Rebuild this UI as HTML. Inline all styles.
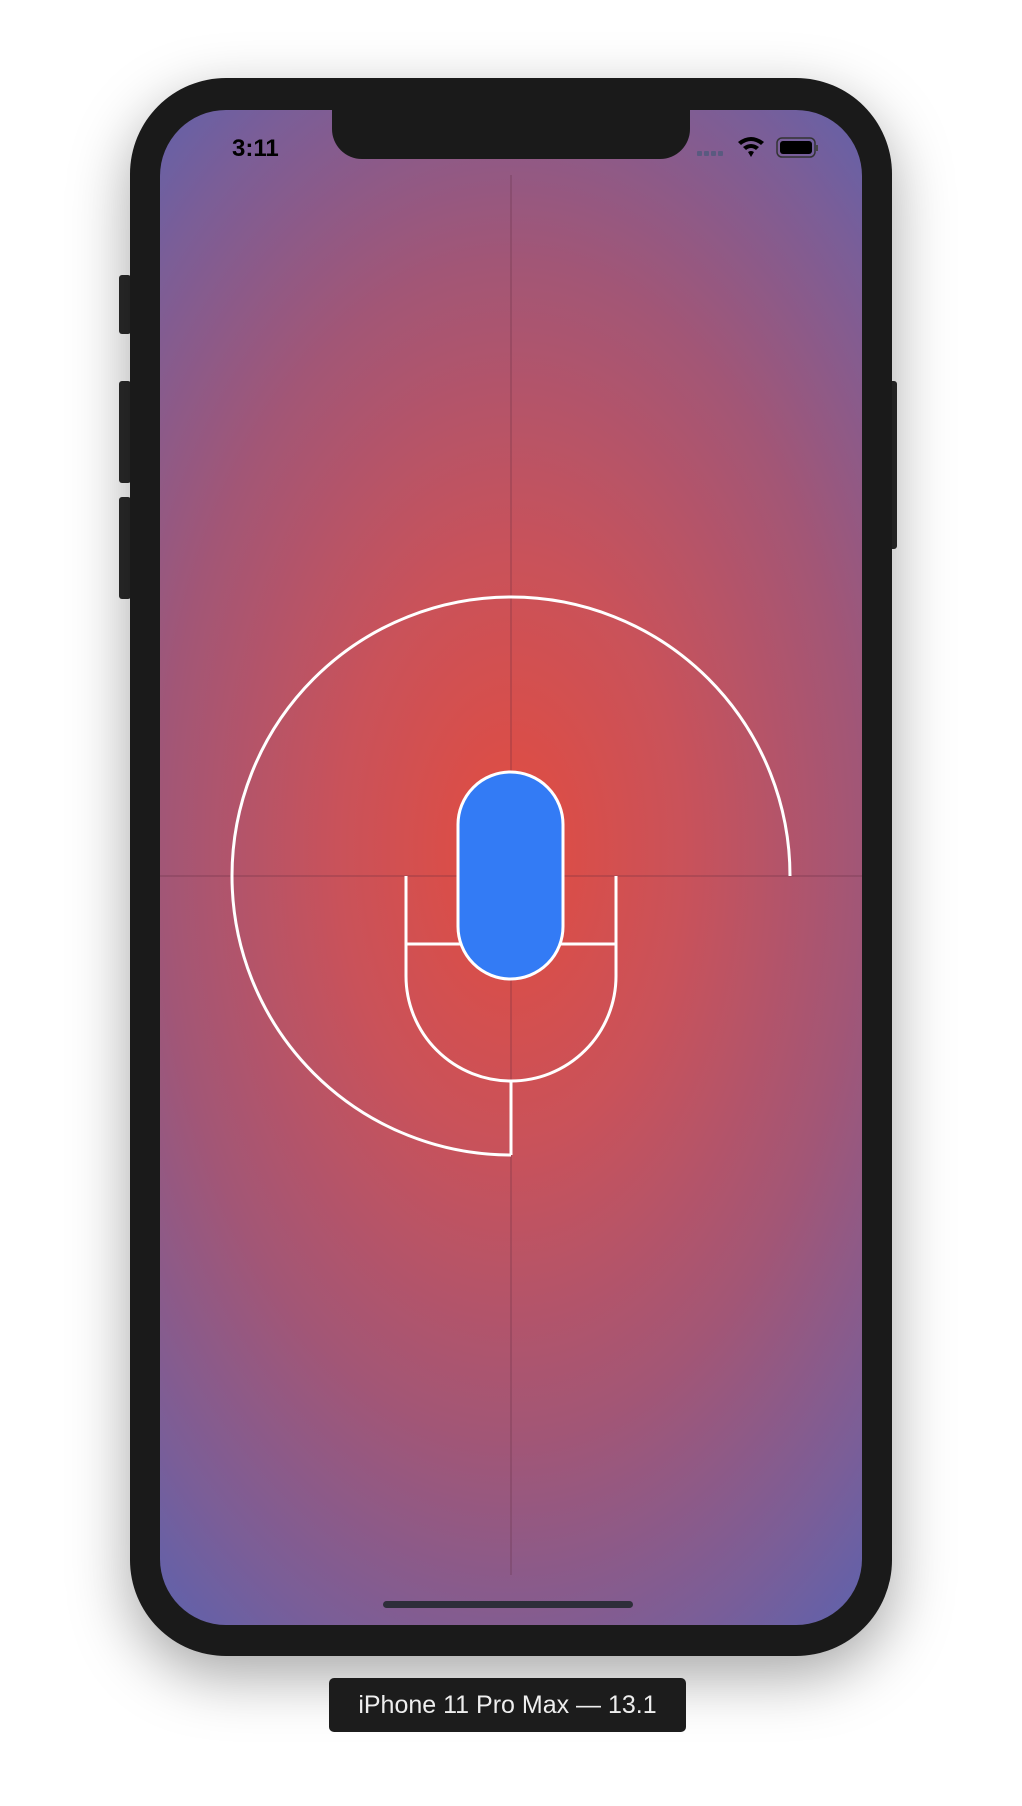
<!DOCTYPE html>
<html><head><style>
html,body{margin:0;padding:0;background:#fff;}
body{width:1022px;height:1806px;position:relative;overflow:hidden;font-family:"Liberation Sans",sans-serif;}
.phone{position:absolute;left:130px;top:78px;width:762px;height:1578px;background:#1a1a1a;border-radius:96px;box-shadow:0 20px 60px rgba(0,0,0,0.35);}
.btn{position:absolute;background:#2a2a2a;border-radius:3px;}
.screen{position:absolute;left:160px;top:110px;width:702px;height:1515px;border-radius:66px;overflow:hidden;
background:radial-gradient(ellipse 580px 980px at 351px 740px,#e24c40 0%,#c9525a 30%,#a25676 60%,#7a5e98 85%,#5d62ad 100%);}
.notch{position:absolute;left:172px;top:-10px;width:358px;height:59px;background:#1a1a1a;border-radius:0 0 30px 30px;}
.time{position:absolute;left:72px;top:25px;font-size:24px;font-weight:bold;color:#000;}
.label{position:absolute;left:329px;top:1678px;width:357px;height:54px;background:#1c1c1c;border-radius:5px;color:#eee;font-size:25px;text-align:center;line-height:54px;}
</style></head><body>
<div class="btn" style="left:119px;top:275px;width:12px;height:59px"></div>
<div class="btn" style="left:119px;top:381px;width:12px;height:102px"></div>
<div class="btn" style="left:119px;top:497px;width:12px;height:102px"></div>
<div class="btn" style="left:888px;top:381px;width:9px;height:168px"></div>
<div class="phone"></div>
<div class="screen">
  <svg width="702" height="1515" style="position:absolute;left:0;top:0">
    <line x1="351" y1="65" x2="351" y2="1465" stroke="rgba(90,40,60,0.45)" stroke-width="1"/>
    <line x1="0" y1="766" x2="702" y2="766" stroke="rgba(90,40,60,0.45)" stroke-width="1"/>
    <path d="M351 1045 A279 279 0 1 1 630 766" fill="none" stroke="#fff" stroke-width="3"/>
    <path d="M246 766 V866 A105 105 0 0 0 456 866 V766" fill="none" stroke="#fff" stroke-width="3"/>
    <line x1="246" y1="834" x2="456" y2="834" stroke="#fff" stroke-width="3"/>
    <line x1="351" y1="971" x2="351" y2="1045" stroke="#fff" stroke-width="3"/>
    <rect x="298" y="662" width="105" height="207" rx="52.5" fill="#337bf5" stroke="#fff" stroke-width="3"/>
    <g fill="#5a5a80"><rect x="537" y="41" width="5" height="5" rx="1"/><rect x="544" y="41" width="5" height="5" rx="1"/><rect x="551" y="41" width="5" height="5" rx="1"/><rect x="558" y="41" width="5" height="5" rx="1"/></g>
    <path d="M578 32 Q591 22 604 32 L601 35 Q591 27 581 35Z M583 37 Q591 31 599 37 L596 40 Q591 36 586 40Z M588 42 L591 47 L594 42 Q591 40 588 42Z" fill="#000"/>
    <rect x="617" y="28" width="38" height="19" rx="5" fill="none" stroke="#333" stroke-width="1.5"/>
    <rect x="620" y="31" width="32" height="13" rx="3" fill="#000"/>
    <rect x="656" y="35" width="2" height="6" fill="#444"/>
    <rect x="223" y="1491" width="250" height="7" rx="3.5" fill="#2e2e3a"/>
  </svg>
  <div class="notch"></div>
  <div class="time">3:11</div>
</div>
<div class="label">iPhone 11 Pro Max — 13.1</div>
</body></html>
